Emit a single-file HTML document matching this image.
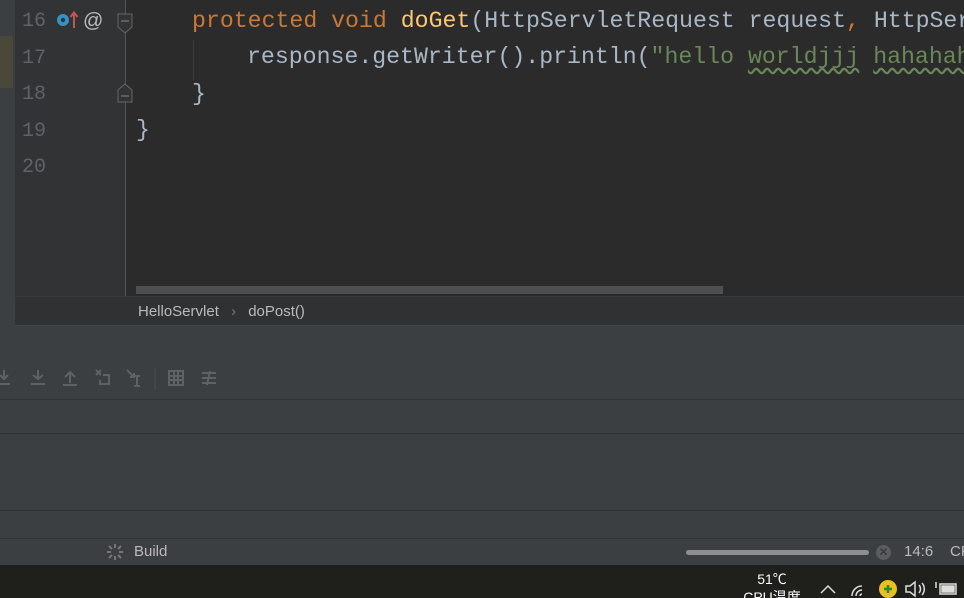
<!DOCTYPE html>
<html style="overflow:hidden;width:964px;height:598px"><head><meta charset="utf-8"><style>
*{margin:0;padding:0;box-sizing:border-box}
body{width:964px;height:598px;overflow:hidden;background:#3c3f41;position:relative;font-family:"Liberation Sans",sans-serif}
.a{position:absolute}
.code{font-family:"Liberation Mono",monospace;font-size:23.2px;white-space:pre;color:#a9b7c6;line-height:36px}
.ln{font-family:"Liberation Mono",monospace;font-size:20px;color:#606366}
.k{color:#cc7832}.f{color:#ffc66d}.s{color:#6a8759}
.w{text-decoration:underline wavy #6a8759;text-underline-offset:4px}
</style></head><body>
<div class="a" style="left:0;top:0;width:15px;height:296px;background:#3c3f41"></div>
<div class="a" style="left:0;top:36px;width:13px;height:52px;background:#4a4838"></div>
<div class="a" style="left:15px;top:0;width:111px;height:296px;background:#313335"></div>
<div class="a" style="left:125px;top:0;width:1px;height:296px;background:#555"></div>
<div class="a" style="left:126px;top:0;width:838px;height:296px;background:#2b2b2b;overflow:hidden">
<div class="a" style="left:67px;top:40px;width:1px;height:40px;background:#3b3b3b"></div>
<div class="a code" style="left:66px;top:3px"><span class="k">protected void </span><span class="f">doGet</span>(HttpServletRequest request<span class="k">, </span>HttpServletResponse</div>
<div class="a code" style="left:121px;top:39px">response.getWriter().println(<span class="s">"hello <span class="w">worldjjj</span> <span class="w">hahahaha</span></span></div>
<div class="a code" style="left:66px;top:76px">}</div>
<div class="a code" style="left:10px;top:112px">}</div>
<div class="a" style="left:10px;top:286px;width:587px;height:8px;background:#4d4f51"></div>
</div>
<div class="a ln" style="left:22px;top:4px;line-height:36.5px">16<br>17<br>18<br>19<br>20</div>
<svg class="a" style="left:54px;top:8px" width="52" height="24">
<circle cx="9" cy="12" r="6" fill="#3592c4"/><circle cx="9" cy="12" r="2.2" fill="#313335"/>
<path d="M20 20V5M16.5 9L20 4.5 23.5 9" stroke="#c75450" stroke-width="2" fill="none"/>
<text x="29" y="19" font-family="Liberation Sans" font-size="20" fill="#bbb">@</text></svg>
<svg class="a" style="left:117px;top:12px" width="16" height="92">
<path d="M1 2h14v13l-7 6-7-6z" fill="#313335" stroke="#666"/><path d="M4 9h8" stroke="#888"/>
<path d="M1 90V78l7-6 7 6v12z" fill="#313335" stroke="#666"/><path d="M4 84h8" stroke="#888"/></svg>
<div class="a" style="left:0;top:296px;width:964px;height:30px;background:#2f3133;border-top:1px solid #3a3a3a;border-bottom:1px solid #444"></div>
<div class="a" style="left:0;top:296px;width:15px;height:30px;background:#3c3f41"></div>
<div class="a" style="left:138px;top:303px;font-size:15px;color:#bbb">HelloServlet <span style="color:#777;margin:0 8px">›</span> doPost()</div>
<svg class="a" style="left:0;top:366px" width="230" height="24" stroke="#5f6264" stroke-width="2" fill="none">
<path d="M4 4v9M0 9l4 4 4-4M0 18h10"/><path d="M38 4v9M33 9l5 4 5-4M31 18h14"/><path d="M70 17V7M65 11l5-5 5 5M63 19h14"/>
<path d="M96 4l5 5M101 4l-5 5M103 9h6v9h-9v-4"/><path d="M127 4l7 7M134 7v4h-4M137 10v10M134 10h6M134 20h6"/>
<path d="M155 2v22" stroke="#4a4c4e" stroke-width="1"/><path d="M169 5h14v14h-14zM169 10h14M169 14h14M174 5v14M178 5v14"/><path d="M202 7h14M202 12h14M202 17h14M210 5l-3 14"/></svg>
<div class="a" style="left:0;top:399px;width:964px;height:1px;background:#323232"></div>
<div class="a" style="left:0;top:433px;width:964px;height:1px;background:#323232"></div>
<div class="a" style="left:0;top:510px;width:964px;height:1px;background:#323232"></div>
<div class="a" style="left:0;top:538px;width:964px;height:1px;background:#333"></div>
<svg class="a" style="left:106px;top:543px" width="18" height="18" stroke="#777" stroke-width="2"><path d="M9 1v4M9 13v4M1 9h4M13 9h4M3 3l3 3M12 12l3 3M15 3l-3 3M6 12l-3 3"/></svg>
<div class="a" style="left:134px;top:543px;font-size:15px;color:#bbb">Build</div>
<div class="a" style="left:686px;top:550px;width:183px;height:5px;border-radius:3px;background:#8c8e90"></div>
<div class="a" style="left:876px;top:545px;width:15px;height:15px;border-radius:50%;background:#5a5d60;color:#333;font-size:12px;line-height:15px;text-align:center">✕</div>
<div class="a" style="left:904px;top:543px;font-size:15px;color:#bbb">14:6</div>
<div class="a" style="left:950px;top:543px;width:14px;overflow:hidden;font-size:15px;color:#bbb">CF</div>
<div class="a" style="left:0;top:565px;width:964px;height:33px;background:#1f1f1c;overflow:hidden">
<div class="a" style="left:737px;top:5px;width:70px;text-align:center;font-size:14px;color:#fff;font-family:'Liberation Sans','Noto Sans CJK SC',sans-serif;line-height:18px">51℃<br>CPU温度</div>
<svg class="a" style="left:818px;top:13px" width="146" height="20" fill="none" stroke="#ddd" stroke-width="1.5">
<path d="M3 15l7-7 7 7"/><path d="M34 18a10 10 0 0 1 10-10M38 18a6 6 0 0 1 6-6M42 18a2 2 0 0 1 2-2"/>
<circle cx="70" cy="11" r="9" fill="#e8c020" stroke="none"/><path d="M66 11h8M70 7v8" stroke="#2a8a2a" stroke-width="2.5"/>
<path d="M88 8h4l5-4v14l-5-4h-4z"/><path d="M101 7a6 6 0 0 1 0 8M104 5a9 9 0 0 1 0 12"/>
<rect x="122" y="6" width="16" height="10"/><rect x="124" y="8" width="12" height="6" fill="#ddd"/><path d="M118 4v6"/></svg>
</div>
</body></html>
